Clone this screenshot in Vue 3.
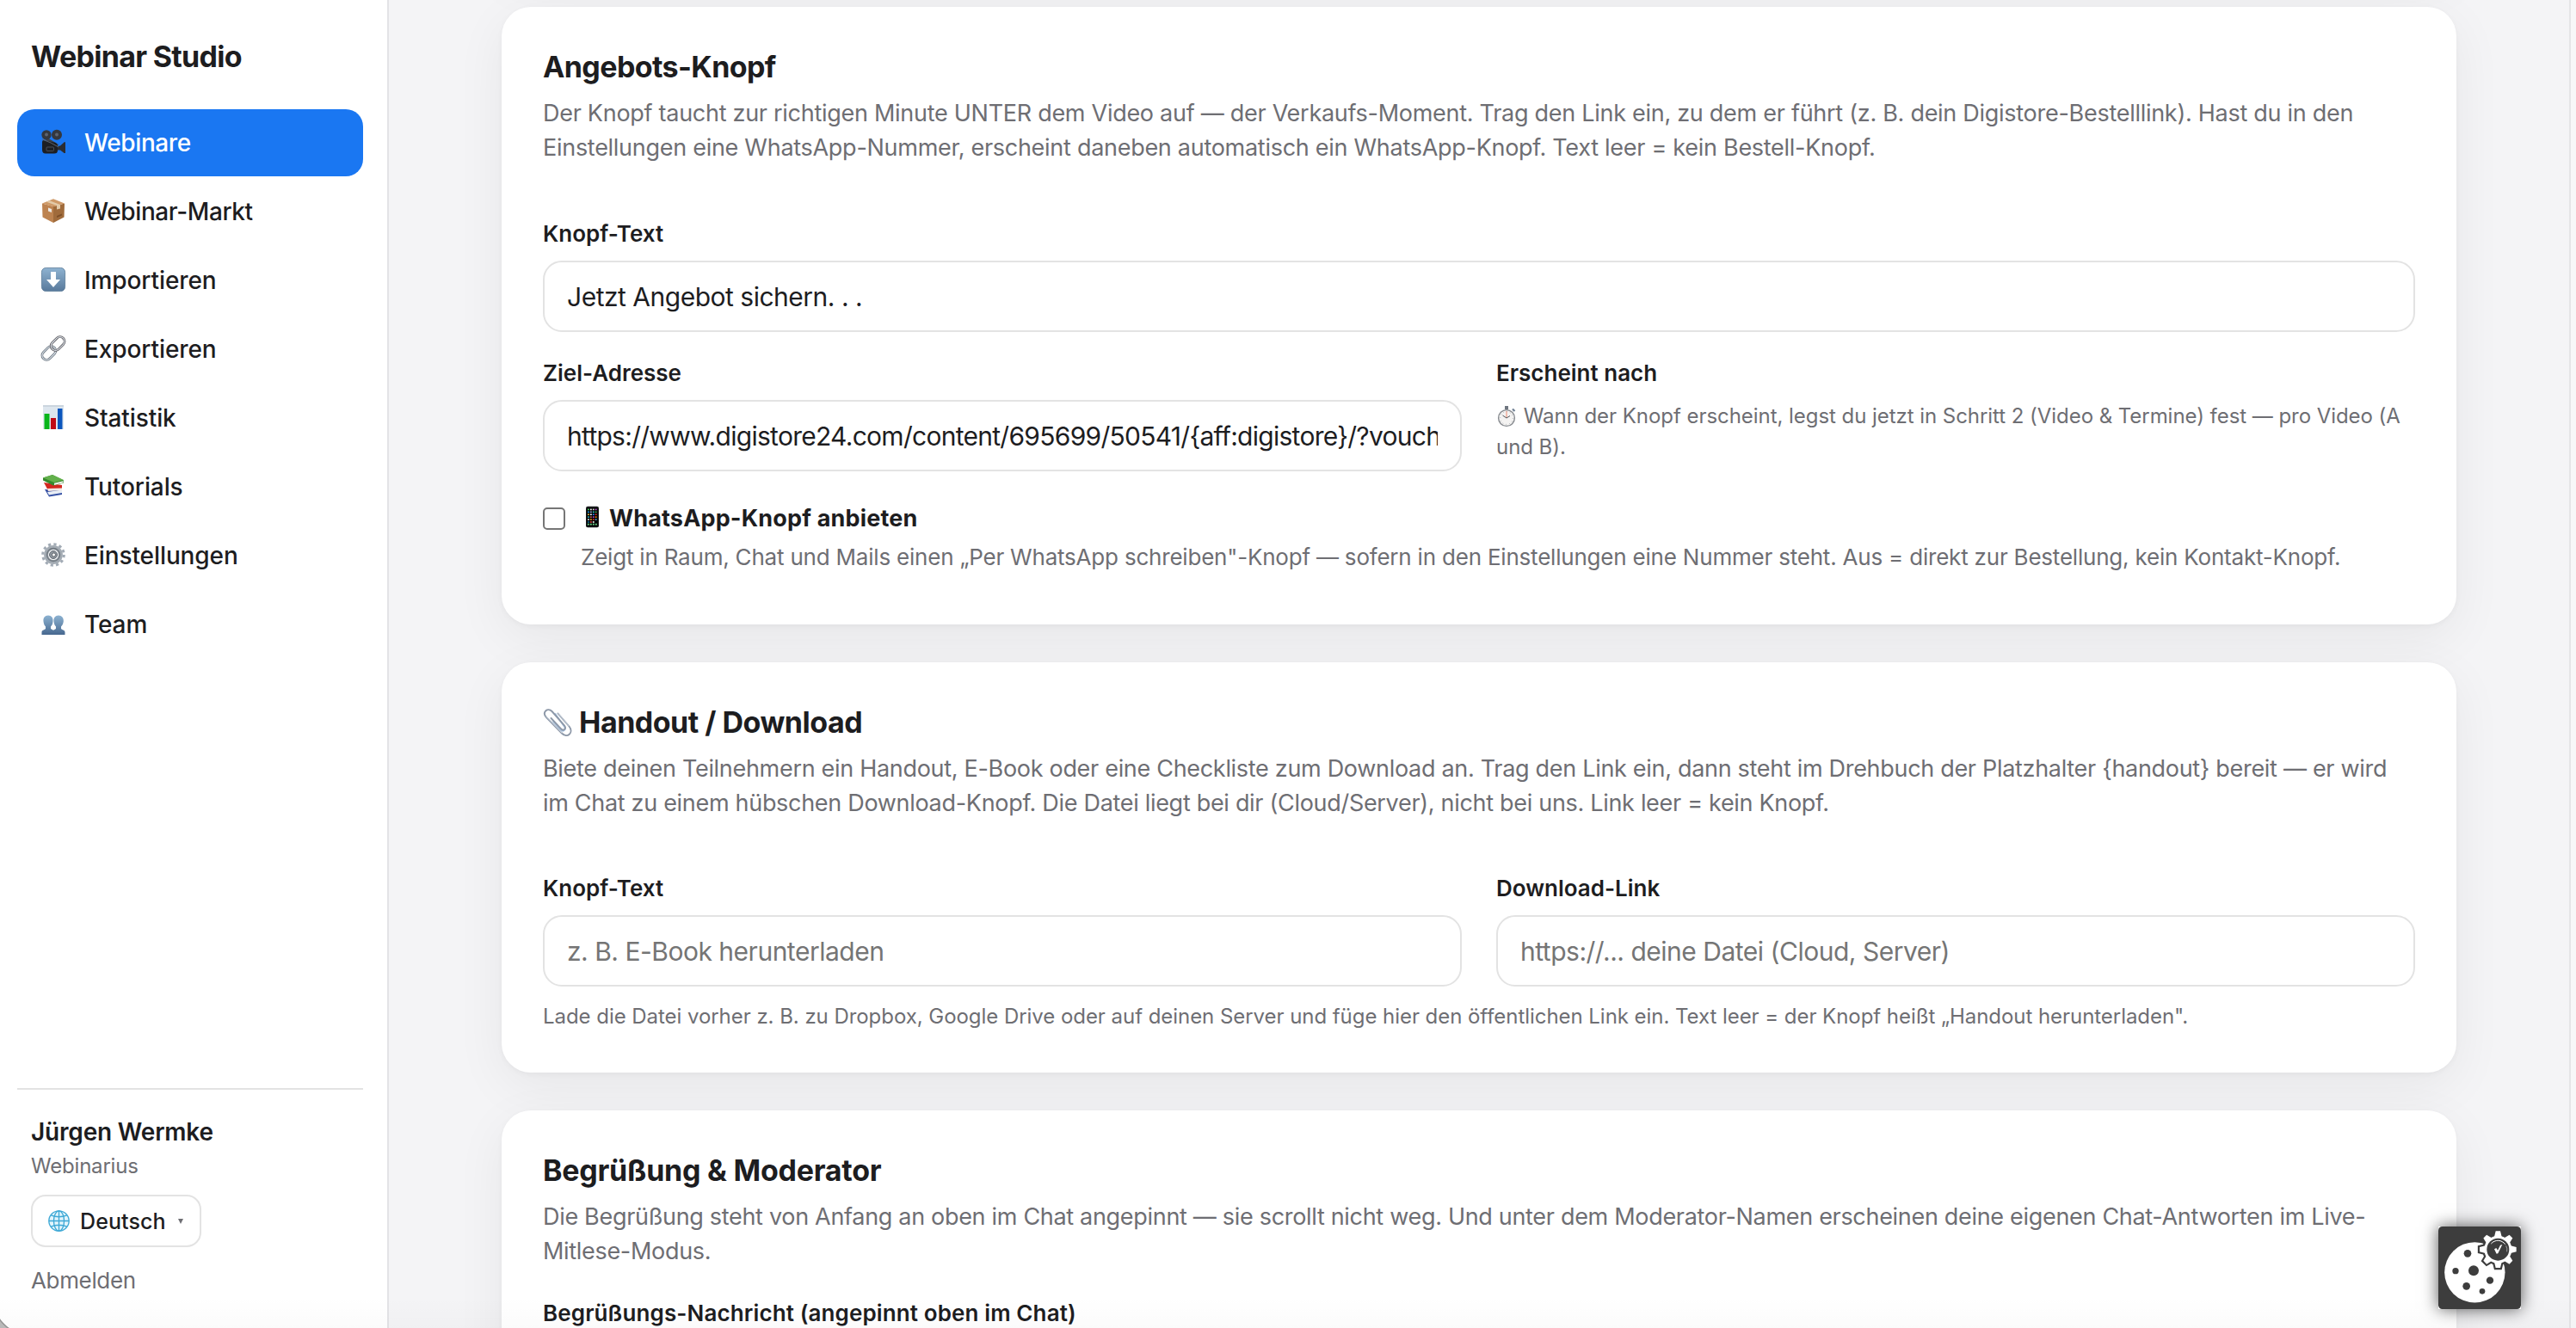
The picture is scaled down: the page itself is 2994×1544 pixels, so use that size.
<template>
  <div class="app-shell">
    <aside class="sidebar">
      <div class="brand">Webinar Studio</div>

      <nav class="nav">
        <a v-for="item in navItems" :key="item.label"
          class="nav-item" :class="{ active: item.label === activeItem, wide: item.label.startsWith('Web') }"
          @click="activeItem = item.label">
          <svg class="nav-icon" viewBox="0 0 28 28" v-html="item.icon"></svg>
          <span>{{ item.label }}</span>
        </a>
      </nav>

      <div class="sidebar-footer">
        <div class="user-name">Jürgen Wermke</div>
        <div class="user-org">Webinarius</div>
        <button class="lang-btn" type="button">
          <svg class="globe" viewBox="0 0 24 24" fill="none" stroke="#3fa9d6" stroke-width="1.3">
            <circle cx="12" cy="12" r="11.2" fill="#e3f5fc" />
            <ellipse cx="12" cy="12" rx="5.8" ry="11.2" />
            <path d="M12 .8v22.4M.8 12h22.4M3 5.6q9 3.6 18 0M3 18.4q9-3.6 18 0" />
          </svg>
          <span>Deutsch</span>
          <svg class="caret" viewBox="0 0 6 6"><path d="M0 0h6L3 6z" fill="#6e6e73" /></svg>
        </button>
        <a class="logout">Abmelden</a>
      </div>
    </aside>

    <main class="content">
      <section class="card card-previous" aria-hidden="true"></section>

      <!-- Angebots-Knopf -->
      <section class="card">
        <h2 class="card-title title-offer">Angebots-Knopf</h2>
        <p class="card-desc">Der Knopf taucht zur richtigen Minute UNTER dem Video auf — der Verkaufs-Moment. Trag den Link ein, zu dem er führt (z. B. dein Digistore-Bestelllink). Hast du in den<br>Einstellungen eine WhatsApp-Nummer, erscheint daneben automatisch ein WhatsApp-Knopf. Text leer = kein Bestell-Knopf.</p>

        <div class="field">
          <label class="label">Knopf-Text</label>
          <input v-model="offer.text" class="input" type="text">
        </div>

        <div class="grid-2">
          <div class="field">
            <label class="label">Ziel-Adresse</label>
            <input v-model="offer.url" class="input input-url" type="text">
          </div>
          <div class="field">
            <label class="label">Erscheint nach</label>
            <p class="hint">
              <svg class="stopwatch" viewBox="0 0 22 26">
                <path d="M9 1h4v4H9z" fill="#6f7680" />
                <path d="M18 4.5l2.5 2.5" stroke="#6f7f92" stroke-width="2.2" />
                <circle cx="11" cy="15" r="9.4" fill="#f4f3f2" stroke="#85898e" stroke-width="1.4" />
                <circle cx="11" cy="15" r="7.4" fill="none" stroke="#9a9da1" stroke-width="1" stroke-dasharray=".7 3.17" />
                <path d="M11 15V7" stroke="#f08a70" stroke-width="1" />
                <path d="M6.5 12l4.5 3 4-2.5" stroke="#55585c" stroke-width="1" fill="none" />
              </svg>
              Wann der Knopf erscheint, legst du jetzt in Schritt 2 (Video &amp; Termine) fest — pro Video (A<br>und B).
            </p>
          </div>
        </div>

        <label class="check-row">
          <input v-model="offer.whatsapp" class="checkbox" type="checkbox">
          <span class="check-body">
            <span class="check-title">
              <svg class="phone" viewBox="0 0 16 26">
                <rect width="16" height="26" rx="2.2" fill="#17181a" />
                <rect x="1.4" y="2" width="13.2" height="22.5" rx="1" fill="#000" />
                <g v-for="(row, y) in phoneApps" :key="y">
                  <rect v-for="(color, x) in row" :key="x" :x="2.2 + x * 3.1" :y="3 + y * 3.1" width="1.9" height="1.7" :fill="color" />
                </g>
                <path d="M2 22.2h12" stroke="#6fdc8c" stroke-width="2" stroke-dasharray="2 1.2" />
              </svg>
              <span>WhatsApp-Knopf anbieten</span>
            </span>
            <span class="check-hint">Zeigt in Raum, Chat und Mails einen „Per WhatsApp schreiben"-Knopf — sofern in den Einstellungen eine Nummer steht. Aus = direkt zur Bestellung, kein Kontakt-Knopf.</span>
          </span>
        </label>
      </section>

      <!-- Handout / Download -->
      <section class="card card-handout">
        <h2 class="card-title title-handout">
          <svg class="clip" viewBox="0 0 34 34" fill="none" stroke-linecap="round">
            <path d="M12 16l8.5 9.5c3 3.2 7-.2 4.500-3.6L14.500 7" stroke="#a6c3e3" stroke-width="1.7" />
            <path d="M17.500 6.500L30.500 21.500c6 7.500-2.500 14.500-8.500 8L3.500 10.500c-4.500-5.500 2-11.500 7-6.500L25 20.500c2.800 3.800-1.300 7-4.200 3.700L9.500 12" stroke="#8d98a8" stroke-width="1.9" />
            <path d="M17.500 6L30 20.800M4.200 10.500L22 29" stroke="#d9e2ec" stroke-width=".8" />
          </svg>
          <span>Handout / Download</span>
        </h2>
        <p class="card-desc">Biete deinen Teilnehmern ein Handout, E-Book oder eine Checkliste zum Download an. Trag den Link ein, dann steht im Drehbuch der Platzhalter {handout} bereit — er wird<br>im Chat zu einem hübschen Download-Knopf. Die Datei liegt bei dir (Cloud/Server), nicht bei uns. Link leer = kein Knopf.</p>

        <div class="grid-2">
          <div class="field">
            <label class="label">Knopf-Text</label>
            <input v-model="handout.text" class="input" type="text" placeholder="z. B. E-Book herunterladen">
          </div>
          <div class="field">
            <label class="label">Download-Link</label>
            <input v-model="handout.url" class="input" type="text" placeholder="https://... deine Datei (Cloud, Server)">
          </div>
        </div>
        <p class="hint hint-below">Lade die Datei vorher z. B. zu Dropbox, Google Drive oder auf deinen Server und füge hier den öffentlichen Link ein. Text leer = der Knopf heißt „Handout herunterladen".</p>
      </section>

      <!-- Begrüßung -->
      <section class="card card-welcome">
        <h2 class="card-title title-welcome">Begrüßung &amp; Moderator</h2>
        <p class="card-desc">Die Begrüßung steht von Anfang an oben im Chat angepinnt — sie scrollt nicht weg. Und unter dem Moderator-Namen erscheinen deine eigenen Chat-Antworten im Live-<br>Mitlese-Modus.</p>
        <div class="field">
          <label class="label label-long">Begrüßungs-Nachricht (angepinnt oben im Chat)</label>
          <input class="input" type="text">
        </div>
      </section>
    </main>

    <div class="scroll-track"></div>

    <button class="cookie-btn" type="button" aria-label="Cookie-Einstellungen">
      <svg viewBox="0 0 288 288">
        <rect width="288" height="288" rx="14" fill="#3d3d3d" />
        <circle cx="127" cy="160" r="105.500" fill="#fff" />
        <g fill="#3d3d3d">
          <circle cx="102" cy="94" r="13" />
          <circle cx="60" cy="155" r="11" />
          <circle cx="123" cy="154" r="18" />
          <circle cx="180" cy="188" r="12.500" />
          <circle cx="98" cy="208" r="13" />
          <circle cx="153" cy="226" r="10" />
        </g>
        <g transform="translate(208 80)">
          <g fill="#3d3d3d" stroke="#3d3d3d" stroke-width="13">
            <circle r="48" />
            <path v-for="n in 8" :key="n" d="M-13-44L-8-64H8L13-44z" :transform="`rotate(${n * 45})`" />
          </g>
          <g fill="#fff">
            <circle r="48" />
            <path v-for="n in 8" :key="n" d="M-13-44L-8-64H8L13-44z" :transform="`rotate(${n * 45})`" />
          </g>
          <circle r="39" fill="#3d3d3d" />
          <path d="M-24-20A31 31 0 0 1 25-18" fill="none" stroke="#fff" stroke-width="3" />
          <path d="M28-13A31 31 0 0 1 31 8" fill="none" stroke="#fff" stroke-width="1.500" />
          <path d="M-13-1L-6-5L-1 3L8-15L15-17L0 14L-5 15z" fill="#fff" />
        </g>
      </svg>
    </button>

    <div class="bottom-shade"></div>
    <div class="window-corner"></div>
  </div>
</template>

<script setup>
import { ref, reactive } from 'vue';

const activeItem = ref('Webinare');

// Navigationspunkte mit ihren Symbolen
const navItems = [
  {
    label: 'Webinare',
    icon: `<path d="M1 9l17 11 2-3L7 9z" fill="#3f434a"/>
      <circle cx="6" cy="5.800" r="5.600" fill="#34373d"/><circle cx="18" cy="5.800" r="6" fill="#34373d"/>
      <circle cx="6" cy="5.500" r="2" fill="#5c6370"/><circle cx="18" cy="5.500" r="2" fill="#5c6370"/>
      <path d="M1 14q0-2 2-2l14 3 2 3v6q0 3.500-4 3.500H5Q1 27.500 1 23z" fill="#1d1f23"/>
      <path d="M19 19l3-.5 5-4.500 1 .5V27h-1.500l-4.500-3.500H19z" fill="#2a2d33"/>
      <rect x="6" y="20" width="8.500" height="4.500" rx="1" fill="none" stroke="#555b64" stroke-width=".8"/>
      <path d="M1 11l10 4 9 5" stroke="#5d636c" stroke-width="1" fill="none"/>`,
  },
  {
    label: 'Webinar-Markt',
    icon: `<path d="M1 5.500L14 9v19L1.500 21.500z" fill="#bd8350"/><path d="M27 5.500L14 9v19l12.500-6.500z" fill="#a06b3b"/>
      <path d="M14 .3L27 5.500 14 9.300 1 5.500z" fill="#cf9a68"/>
      <path d="M9.500 2.200L22 6.900v4.500l-4 1.200V8L6 3.700z" fill="#e3cba9"/>
      <path d="M8 10.500l4 1.500v4L8 14.500z" fill="#ece9e4"/><path d="M18 20l6-2.500v2L18 22z" fill="#7c4e27"/>`,
  },
  {
    label: 'Importieren',
    icon: `<defs><linearGradient id="dl" x2="0" y2="1"><stop stop-color="#8fb3d1"/><stop offset="1" stop-color="#58799b"/></linearGradient></defs>
      <rect x=".4" y=".4" width="27.200" height="27.200" rx="5" fill="url(#dl)" stroke="#587895" stroke-width=".8"/>
      <path d="M11 5h6v9h5l-8 9-8-9h5z" fill="#fff"/>`,
  },
  {
    label: 'Exportieren',
    icon: `<g fill="none" transform="rotate(-45 14 14)"><rect x="-2.500" y="9" width="18" height="10.500" rx="5.250" stroke="#66717c" stroke-width="2.800"/>
      <rect x="-2.500" y="9" width="18" height="10.500" rx="5.250" stroke="#d8dfe6" stroke-width="1.200"/>
      <rect x="12.500" y="8.500" width="18" height="10.500" rx="5.250" stroke="#565358" stroke-width="2.800"/>
      <rect x="12.500" y="8.500" width="18" height="10.500" rx="5.250" stroke="#d8dfe6" stroke-width="1.200"/></g>`,
  },
  {
    label: 'Statistik',
    icon: `<path d="M2 0h24v28H2z" fill="#dde6ee"/><path d="M2 0h24v2H2z" fill="#cbd5de"/>
      <path d="M3.500 10h6v18h-6z" fill="#09b61b"/><path d="M11 15h6v13h-6z" fill="#c00b16"/><path d="M19 4h5.500v24H19z" fill="#0c56bd"/>`,
  },
  {
    label: 'Tutorials',
    icon: `<path d="M4 18l5 8.500 15-2.500v-5z" fill="#3450a4"/><path d="M7 21l17-2.500v3.500L9 24.500z" fill="#e9eef5"/>
      <path d="M3 10l5 9.500L24 18v-5z" fill="#d2281f"/><path d="M7 17l17-.5v2.500L8 20z" fill="#f4e9e4"/>
      <path d="M2 4.500L13 1l13 6.500v3L14 13.500 2 7.500z" fill="#358a2c"/><path d="M2 4.500L13 1l13 6-11 3z" fill="#62b04b"/><path d="M15 10.800l10.500-2.500v1.900L15 13z" fill="#f1f3ee"/>`,
  },
  {
    label: 'Einstellungen',
    icon: `<g fill="none"><circle cx="14" cy="14" r="12.300" stroke="#a2abb5" stroke-width="3" stroke-dasharray="3.220 3.220"/>
      <circle cx="14" cy="14" r="8.400" stroke="#a3abb3" stroke-width="5"/><circle cx="14" cy="14" r="7.400" stroke="#737b83" stroke-width="1.600"/>
      <circle cx="14" cy="14" r="4.500" fill="#8d959d" stroke="#656c74" stroke-width="1"/><circle cx="14.500" cy="14" r="2" fill="#fff" stroke="#50555b" stroke-width=".8"/></g>`,
  },
  {
    label: 'Team',
    icon: `<defs><linearGradient id="tm" x2="0" y2="1"><stop stop-color="#8cb2d1"/><stop offset="1" stop-color="#47688f"/></linearGradient></defs>
      <path d="M8 4.500c-4 0-6 3-5.500 7 .3 2.500 1 4.500 2.500 6v2.500c-1.500 1.500-4.500 1.500-4.500 4v3h27v-3c0-2.500-3-2.500-4.500-4v-2.500c1.500-1.500 2.500-3.500 2.800-6 .4-4-2-7-5.800-7s-6 3-5.500 7c.3 2.500 1 4.500 2.500 6V20l-3 1.700L11 20v-2.500c1.500-1.500 2.300-3.500 2.500-6 .5-4-1.500-7-5.500-7z" fill="url(#tm)"/>`,
  },
];

const phoneApps = [
  ['#4cd964', '#fff', '#ddd', '#c05adf'],
  ['#1f9cf0', '#9ad', '#3cc', '#4caf50'],
  ['#e8c34a', '#fff', '#2b8cff', '#d33'],
  ['#2bb8c9', '#c65', '#b04ad8', '#f80'],
  ['#eee', '#f5a623', '#e33', '#5ad'],
  ['#17a', '#e44', '#fff', '#000'],
];

const offer = reactive({
  text: 'Jetzt Angebot sichern. . .',
  url: 'https://www.digistore24.com/content/695699/50541/{aff:digistore}/?voucher=',
  whatsapp: false,
});

const handout = reactive({ text: '', url: '' });
</script>

<style>
body {
  margin: 0;
  background: #f4f4f6;
}
</style>

<style scoped>
* {
  box-sizing: border-box;
}

.app-shell {
  position: relative;
  display: flex;
  height: 1544px;
  overflow: hidden;
  background: #f4f4f6;
  color: #1d1d1f;
  font-family: Inter, "Liberation Sans", sans-serif;
}

/* Seitenleiste */
.sidebar {
  display: flex;
  flex-direction: column;
  flex: 0 0 452px;
  padding: 46px 28px 36px 20px;
  background: #fff;
  border-right: 2px solid #e3e3e6;
}

.brand {
  padding-left: 16px;
  font-size: 34px;
  line-height: 40px;
  font-weight: 700;
  letter-spacing: -0.7px;
}

.nav {
  display: flex;
  flex-direction: column;
  gap: 2px;
  margin-top: 41px;
}

.nav-item {
  display: flex;
  align-items: center;
  gap: 18px;
  height: 78px;
  padding: 0 24px;
  border-radius: 20px;
  font-size: 28px;
  font-weight: 500;
  letter-spacing: -0.1px;
  cursor: pointer;
}

.nav-item.wide {
  padding-right: 0;
  letter-spacing: -0.4px;
}

.nav-item.active {
  background: #1a77f2;
  color: #fff;
}

.nav-icon {
  width: 28px;
  height: 28px;
  margin: 0 4px 2px;
  overflow: visible;
}

.sidebar-footer {
  display: flex;
  flex-direction: column;
  align-items: flex-start;
  margin-top: auto;
  padding: 29px 16px 0;
  border-top: 2px solid #e3e3e3;
}

.user-name {
  font-size: 28px;
  line-height: 40px;
  font-weight: 600;
  letter-spacing: -0.19px;
}

.user-org {
  margin: 2px 0 -1px;
  font-size: 24px;
  line-height: 36px;
  letter-spacing: -0.2px;
  color: #6e6e73;
}

.lang-btn {
  display: flex;
  align-items: center;
  width: 198px;
  height: 61px;
  margin: 16px 0 19px;
  padding: 0 18px;
  border: 2px solid #e3e3e3;
  border-radius: 17px;
  background: #fff;
  color: #1d1d1f;
  font: 500 25px Inter, "Liberation Sans", sans-serif;
  letter-spacing: 0.09px;
}

.globe {
  width: 25px;
  height: 25px;
  margin-right: 12px;
}

.caret {
  width: 6px;
  height: 6px;
  margin-left: 14px;
}

.logout {
  font-size: 26px;
  line-height: 39px;
  letter-spacing: -0.35px;
  color: #6e6e73;
}

/* Inhalt */
.content {
  display: flex;
  flex: 1;
  flex-direction: column;
  align-items: center;
  gap: 44px;
  min-width: 0;
}

.card {
  flex: none;
  width: 2272px;
  padding: 48px;
  border-radius: 34px;
  background: #fff;
  box-shadow: 0 2px 6px rgba(0, 0, 0, 0.04), 0 16px 60px rgba(0, 0, 0, 0.06);
}

.card-previous {
  height: 160px;
  margin-top: -196px;
}

.card-title {
  display: flex;
  align-items: center;
  margin: 0 0 12.5px;
  font-size: 34px;
  line-height: 43px;
  font-weight: 700;
}

.title-offer {
  letter-spacing: -0.6px;
}

.title-handout {
  letter-spacing: -0.5px;
}

.title-welcome {
  letter-spacing: -0.24px;
}

.clip {
  width: 34px;
  height: 34px;
  margin-right: 8px;
}

.card-desc {
  margin: 0 0 60px;
  font-size: 27px;
  line-height: 40.5px;
  letter-spacing: -0.28px;
  color: #6e6e73;
  white-space: nowrap;
}

.card-handout .card-desc {
  margin-bottom: 59px;
  letter-spacing: -0.305px;
}

.card-welcome .card-desc {
  margin-bottom: 32px;
  letter-spacing: -0.31px;
}

.field {
  display: flex;
  flex-direction: column;
  min-width: 0;
}

.label {
  margin-bottom: 12.5px;
  font-size: 26px;
  line-height: 38px;
  font-weight: 600;
}

.label-long {
  letter-spacing: 0.12px;
}

.input {
  width: 100%;
  height: 83px;
  padding: 0 26px;
  border: 2px solid #e3e3e3;
  border-radius: 22px;
  background: #fff;
  color: #1d1d1f;
  font: 400 30px Inter, "Liberation Sans", sans-serif;
  letter-spacing: -0.49px;
  outline: none;
}

.input-url {
  letter-spacing: -0.72px;
}

.input::placeholder {
  color: #757575;
  opacity: 1;
}

.grid-2 {
  display: grid;
  grid-template-columns: 1fr 1fr;
  gap: 40px;
}

.field + .grid-2 {
  margin-top: 28.5px;
}

.hint {
  margin: 1px 0 0;
  font-size: 24px;
  line-height: 36px;
  letter-spacing: -0.05px;
  color: #6e6e73;
  white-space: nowrap;
}

.hint-below {
  margin: 17px 0 -1px;
}

.stopwatch {
  width: 22px;
  height: 26px;
  margin: 0 2px 0 1px;
  vertical-align: -5px;
}

.check-row {
  display: flex;
  gap: 18px;
  margin: 35px 0 11.5px;
}

.checkbox {
  flex: none;
  width: 26px;
  height: 26px;
  margin: 7px 0 0;
  border: 2px solid #767676;
  border-radius: 5px;
  background: #fff;
  appearance: none;
}

.check-body {
  display: flex;
  flex-direction: column;
  gap: 4px;
}

.check-title {
  display: flex;
  align-items: center;
  font-size: 27px;
  line-height: 40.5px;
  font-weight: 700;
  letter-spacing: 0.17px;
}

.phone {
  width: 15px;
  height: 26px;
  margin: 0 12px 4px 6px;
}

.check-hint {
  font-size: 26px;
  line-height: 39px;
  letter-spacing: -0.205px;
  color: #6e6e73;
  white-space: nowrap;
}

.scroll-track {
  flex: 0 0 8px;
  border-left: 2px solid #e5e5e7;
  background: #f7f7f8;
}

/* liegt über dem Inhalt */
.cookie-btn {
  position: absolute;
  right: 64px;
  bottom: 22px;
  width: 96px;
  height: 96px;
  padding: 0;
  border: 0;
  background: #fff;
  box-shadow: 0 0 18px rgba(0, 0, 0, 0.65);
}

.cookie-btn svg {
  display: block;
}

.bottom-shade {
  position: absolute;
  inset: auto 0 0;
  height: 36px;
  background: linear-gradient(transparent, rgba(0, 0, 0, 0.014));
  pointer-events: none;
}

.window-corner {
  position: absolute;
  left: 0;
  bottom: 0;
  width: 36px;
  height: 36px;
  background: radial-gradient(circle at 100% 0, transparent 43.5px, #8a8a8a 44.5px, #b9b9b9 46px);
  pointer-events: none;
}
</style>
